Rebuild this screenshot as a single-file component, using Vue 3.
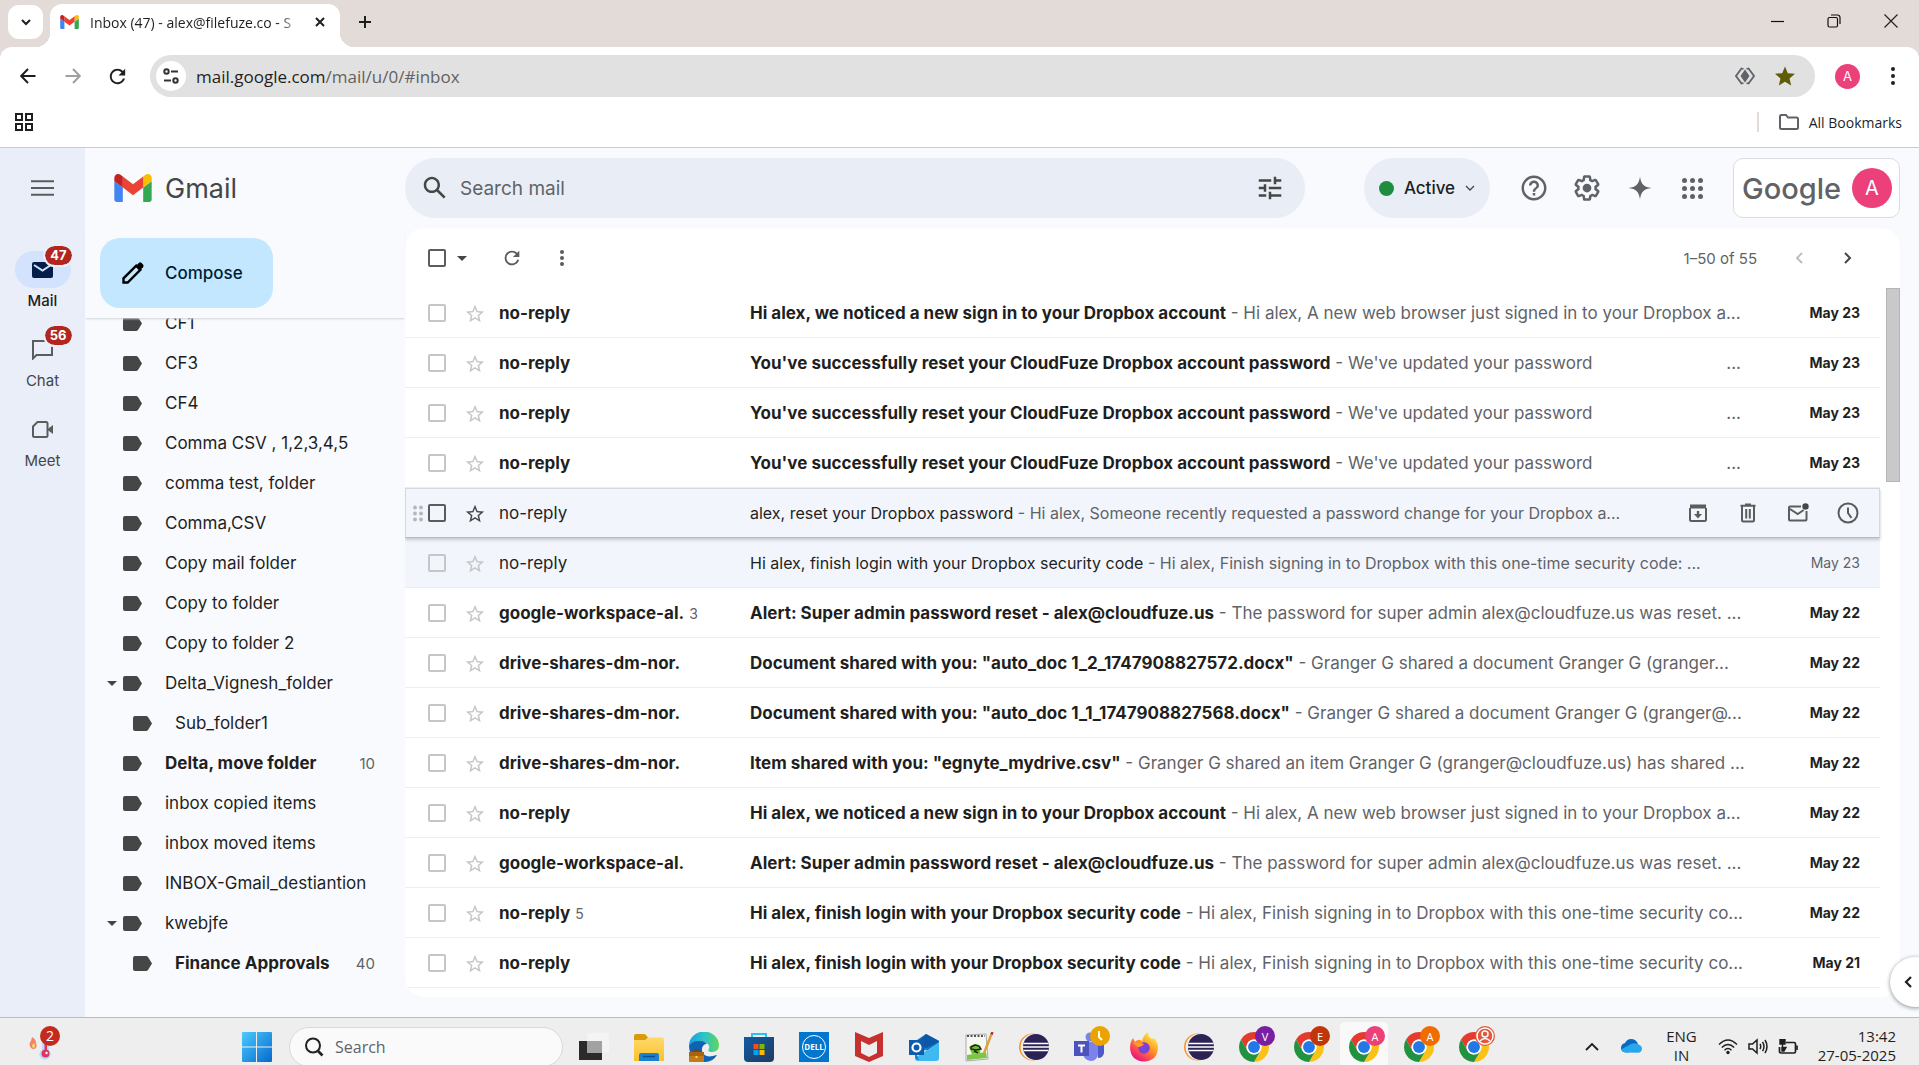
<script setup>
import { ref } from 'vue'

const labels = [
  { name: 'CF1' },
  { name: 'CF3' },
  { name: 'CF4' },
  { name: 'Comma CSV , 1,2,3,4,5' },
  { name: 'comma test, folder' },
  { name: 'Comma,CSV' },
  { name: 'Copy mail folder' },
  { name: 'Copy to folder' },
  { name: 'Copy to folder 2' },
  { name: 'Delta_Vignesh_folder', open: true },
  { name: 'Sub_folder1', sub: true },
  { name: 'Delta, move folder', count: 10 },
  { name: 'inbox copied items' },
  { name: 'inbox moved items' },
  { name: 'INBOX-Gmail_destiantion' },
  { name: 'kwebjfe', open: true },
  { name: 'Finance Approvals', sub: true, count: 40 },
]

const signIn = {
  from: 'no-reply',
  subject: 'Hi alex, we noticed a new sign in to your Dropbox account',
  text: 'Hi alex, A new web browser just signed in to your Dropbox a...',
}
const reset = {
  from: 'no-reply',
  subject: "You've successfully reset your CloudFuze Dropbox account password",
  text: "We've updated your password",
  gap: true,
}
const alertMail = {
  from: 'google-workspace-al.',
  subject: 'Alert: Super admin password reset - alex@cloudfuze.us',
  text: 'The password for super admin alex@cloudfuze.us was reset. ...',
}
const login = {
  from: 'no-reply',
  subject: 'Hi alex, finish login with your Dropbox security code',
  text: 'Hi alex, Finish signing in to Dropbox with this one-time security co...',
}

const mails = ref([
  { ...signIn, date: 'May 23' },
  { ...reset, date: 'May 23' },
  { ...reset, date: 'May 23' },
  { ...reset, date: 'May 23' },
  {
    from: 'no-reply',
    subject: 'alex, reset your Dropbox password',
    text: 'Hi alex, Someone recently requested a password change for your Dropbox a...',
    read: true,
    hover: true,
  },
  { ...login, text: 'Hi alex, Finish signing in to Dropbox with this one-time security code: ...', date: 'May 23', read: true },
  { ...alertMail, count: 3, date: 'May 22' },
  {
    from: 'drive-shares-dm-nor.',
    subject: 'Document shared with you: "auto_doc 1_2_1747908827572.docx"',
    text: 'Granger G shared a document Granger G (granger...',
    date: 'May 22',
  },
  {
    from: 'drive-shares-dm-nor.',
    subject: 'Document shared with you: "auto_doc 1_1_1747908827568.docx"',
    text: 'Granger G shared a document Granger G (granger@...',
    date: 'May 22',
  },
  {
    from: 'drive-shares-dm-nor.',
    subject: 'Item shared with you: "egnyte_mydrive.csv"',
    text: 'Granger G shared an item Granger G (granger@cloudfuze.us) has shared ...',
    date: 'May 22',
  },
  { ...signIn, date: 'May 22' },
  { ...alertMail, date: 'May 22' },
  { ...login, count: 5, date: 'May 22' },
  { ...login, date: 'May 21' },
])

const profiles = [
  { letter: 'V', color: '#7b1fa2' },
  { letter: 'E', color: '#bf360c' },
  { letter: 'A', color: '#ec407a', active: true },
  { letter: 'A', color: '#ef6c00' },
  { letter: '', color: '#e2583a' },
]

const starPath =
  'M22 9.24l-7.19-.62L12 2 9.19 8.63 2 9.24l5.46 4.73L5.82 21 12 17.27 18.18 21l-1.63-7.03L22 9.24zM12 15.4l-3.76 2.27 1-4.28-3.32-2.88 4.38-.38L12 6.1l1.71 4.04 4.38.38-3.32 2.88 1 4.28L12 15.4z'
const refreshPath =
  'M17.65 6.35C16.2 4.9 14.21 4 12 4c-4.42 0-7.99 3.58-7.99 8s3.57 8 7.99 8c3.73 0 6.84-2.55 7.73-6h-2.08c-.82 2.33-3.04 4-5.65 4-3.31 0-6-2.69-6-6s2.69-6 6-6c1.66 0 3.14.69 4.22 1.78L13 11h7V4l-2.35 2.35z'
const logo = [
  ['#4285f4', 'M58 108h14V74L52 59v43c0 3.32 2.69 6 6 6'],
  ['#34a853', 'M120 108h14c3.32 0 6-2.69 6-6V59l-20 15'],
  ['#fbbc04', 'M120 48v26l20-15v-8c0-7.42-8.47-11.65-14.4-7.2'],
  ['#ea4335', 'M72 74V48l24 18 24-18v26L96 92'],
  ['#c5221f', 'M52 51v8l20 15V48l-5.6-4.2c-5.94-4.45-14.4-.22-14.4 7.2'],
]
</script>

<template>
  <div class="screen">
    <header class="browser">
      <div class="tabstrip">
        <button class="tab-search" aria-label="Search tabs">
          <svg width="12" height="12" viewBox="0 0 12 12"><path d="M2 4l4 4 4-4" fill="none" stroke="#1f1f1f" stroke-width="2" /></svg>
        </button>
        <div class="tab">
          <svg width="19" height="14" viewBox="52 42 88 66"><path v-for="p in logo" :key="p[0]" :fill="p[0]" :d="p[1]" /></svg>
          <span class="tab-title">Inbox (47) - alex@filefuze.co - S</span>
          <button aria-label="Close tab">
            <svg width="12" height="12" viewBox="0 0 12 12"><path d="M2 2l8 8M10 2l-8 8" stroke="#1f1f1f" stroke-width="2" /></svg>
          </button>
        </div>
        <button class="new-tab" aria-label="New tab">
          <svg width="14" height="14" viewBox="0 0 14 14"><path d="M7 1v12M1 7h12" stroke="#1f1f1f" stroke-width="2" /></svg>
        </button>
        <div class="window-buttons">
          <button aria-label="Minimize"><svg width="14" height="14" viewBox="0 0 14 14"><path d="M1 7.500h13" stroke="#111" stroke-width="1.200" /></svg></button>
          <button aria-label="Restore">
            <svg width="14" height="14" viewBox="0 0 14 14" fill="none" stroke="#111" stroke-width="1.200">
              <rect x="1" y="3.500" width="9.500" height="9.500" rx="1.500" /><path d="M4 1h6.500a2.500 2.500 0 0 1 2.500 2.500V10" />
            </svg>
          </button>
          <button aria-label="Close"><svg width="14" height="14" viewBox="0 0 14 14"><path d="M.5.5l13 13M13.500.5l-13 13" stroke="#222" stroke-width="1.200" /></svg></button>
        </div>
      </div>

      <div class="toolbar">
        <button aria-label="Back"><svg width="16" height="16" viewBox="0 0 16 16"><path d="M15.500 8H1.500M8 1L1.200 8 8 15" fill="none" stroke="#1f1f1f" stroke-width="2" /></svg></button>
        <button aria-label="Forward"><svg width="16" height="16" viewBox="0 0 16 16"><path d="M.5 8h14M8 1l6.800 7L8 15" fill="none" stroke="#a0a0a0" stroke-width="2" /></svg></button>
        <button aria-label="Reload"><svg width="23" height="23" viewBox="0 0 24 24" fill="#1f1f1f"><path :d="refreshPath" /></svg></button>
        <div class="address">
          <button class="site-info" aria-label="Site information">
            <svg width="18" height="18" viewBox="0 0 18 18" fill="none" stroke="#333" stroke-width="2">
              <circle cx="4.500" cy="4.500" r="2.200" /><path d="M9 4.500h7" /><circle cx="13.500" cy="13.500" r="2.200" /><path d="M2 13.500h7" />
            </svg>
          </button>
          <a class="url" href="#inbox"><b>mail.google.com</b>/mail/u/0/#inbox</a>
          <svg width="20" height="18" viewBox="0 0 20 18" fill="none" stroke="#5f6368" stroke-width="1.800">
            <path d="M8.500 2L6.500 1.500 1 9l5.500 7.500 2-.5M11.500 2l2-.5L19 9l-5.500 7.500-2-.5" />
            <path d="M10 2.500L14.500 9 10 15.500 5.500 9z" fill="#5f6368" stroke="none" />
          </svg>
          <svg width="20" height="20" viewBox="2 2 20 19" fill="#5f5c07"><path d="M12 17.270L18.180 21l-1.640-7.030L22 9.240l-7.190-.61L12 2 9.190 8.630 2 9.240l5.460 4.730L5.820 21z" /></svg>
        </div>
        <span class="avatar small">A</span>
        <button aria-label="Menu"><svg width="6" height="20" viewBox="0 0 6 20" fill="#1f1f1f"><circle cx="3" cy="3" r="2" /><circle cx="3" cy="10" r="2" /><circle cx="3" cy="17" r="2" /></svg></button>
      </div>

      <div class="bookmarks">
        <svg width="18" height="18" viewBox="0 0 18 18" fill="none" stroke="#1f1f1f" stroke-width="2">
          <path d="M1 1h6v6H1zM11 1h6v6h-6zM1 11h6v6H1zM11 11h6v6h-6z" />
        </svg>
        <a class="all-bookmarks" href="#bookmarks">
          <svg width="20" height="16" viewBox="0 0 20 16" fill="none" stroke="#5f6368" stroke-width="2"><path d="M1 2.500Q1 1 2.500 1H7l2 2.500h8.500Q19 3.500 19 5v8.500q0 1.500-1.500 1.500h-15Q1 15 1 13.500z" /></svg>
          All Bookmarks
        </a>
      </div>
    </header>

    <div class="app">
      <nav class="rail">
        <button class="menu" aria-label="Main menu"><svg width="23" height="16" viewBox="0 0 23 16"><path d="M0 1.200h23M0 8h23M0 14.800h23" stroke="#5a5d5b" stroke-width="2" /></svg></button>
        <a class="rail-item current" href="#mail">
          <span class="pill">
            <svg width="21" height="16" viewBox="0 0 21 16"><rect width="21" height="16" rx="2" fill="#041e49" /><path d="M2 3l8.500 5.500L19 3" fill="none" stroke="#d3e3fd" stroke-width="2" /></svg>
            <span class="badge">47</span>
          </span>
          Mail
        </a>
        <a class="rail-item" href="#chat">
          <span class="pill">
            <svg width="21" height="20" viewBox="0 0 21 20"><path d="M1 18.500V1h19v14H4.500z" fill="none" stroke="#5a5d5b" stroke-width="2" /></svg>
            <span class="badge">56</span>
          </span>
          Chat
        </a>
        <a class="rail-item" href="#meet">
          <span class="pill">
            <svg width="21" height="17" viewBox="0 0 21 17"><path d="M5.500 1H14q1.500 0 1.500 1.500v12q0 1.500-1.500 1.500H2.500Q1 16 1 14.500v-9z" fill="none" stroke="#5a5d5b" stroke-width="2" /><path d="M15 8.500L21 4v9z" fill="#5a5d5b" /></svg>
          </span>
          Meet
        </a>
      </nav>

      <aside class="side">
        <div class="brand">
          <svg width="38" height="28" viewBox="52 42 88 66"><path v-for="p in logo" :key="p[0]" :fill="p[0]" :d="p[1]" /></svg>
          <span>Gmail</span>
        </div>
        <div class="compose-wrap">
          <button class="compose">
            <svg width="24" height="24" viewBox="0 0 24 24"><path d="M2.500 21.500v-4.200L15.200 4.600l4.200 4.200L6.700 21.500z" fill="none" stroke="#000" stroke-width="2.400" /><path d="M14.500 5.300l3.300-3.300q1.400-1.300 2.800 0l1.400 1.400q1.300 1.400 0 2.800l-3.300 3.300z" /></svg>
            Compose
          </button>
        </div>
        <div class="labels">
          <ul>
            <li v-for="l in labels" :key="l.name">
              <a href="#label" :class="{ sub: l.sub, unread: l.count }">
                <svg class="arrow" width="10" height="5" viewBox="0 0 10 5"><path v-if="l.open" d="M0 0h10L5 5z" fill="#444746" /></svg>
                <svg width="19" height="15" viewBox="0 0 19 15" fill="#444746"><path d="M2 0h11q1.300 0 2 1l4 6.500-4 6.500q-.7 1-2 1H2q-2 0-2-2V2q0-2 2-2z" /></svg>
                <span class="name">{{ l.name }}</span>
                <span v-if="l.count" class="count">{{ l.count }}</span>
              </a>
            </li>
          </ul>
        </div>
      </aside>

      <div class="content">
        <div class="topbar">
          <form class="search" @submit.prevent>
            <button aria-label="Search mail"><svg width="30" height="30" viewBox="0 0 24 24" fill="#444746"><path d="M20.490 19l-5.730-5.730C15.530 12.200 16 10.910 16 9.500 16 5.910 13.090 3 9.500 3S3 5.910 3 9.500 5.910 16 9.500 16c1.410 0 2.700-.47 3.770-1.240L19 20.490zM5 9.500C5 7.010 7.010 5 9.500 5S14 7.010 14 9.500 11.990 14 9.500 14 5 11.990 5 9.500z" /></svg></button>
            <input type="text" placeholder="Search mail" aria-label="Search mail" />
            <button aria-label="Show search options"><svg width="30" height="30" viewBox="0 0 24 24" fill="#444746"><path d="M3 17v2h6v-2H3zM3 5v2h10V5H3zm10 16v-2h8v-2h-8v-2h-2v6h2zM7 9v2H3v2h4v2h2V9H7zm14 4v-2H11v2h10zm-6-4h2V7h4V5h-4V3h-2v6z" /></svg></button>
          </form>
          <div class="tools">
            <button class="status">
              <i></i>Active
              <svg width="10" height="6" viewBox="0 0 10 6"><path d="M1 1l4 4 4-4" fill="none" stroke="#444746" stroke-width="1.300" /></svg>
            </button>
            <button class="tool" aria-label="Support"><svg width="30" height="30" viewBox="0 0 24 24" fill="#5f6368"><path d="M11 18h2v-2h-2v2zm1-16C6.480 2 2 6.480 2 12s4.480 10 10 10 10-4.480 10-10S17.520 2 12 2zm0 18c-4.410 0-8-3.590-8-8s3.590-8 8-8 8 3.590 8 8-3.590 8-8 8zm0-14c-2.210 0-4 1.790-4 4h2c0-1.100.9-2 2-2s2 .9 2 2c0 2-3 1.750-3 5h2c0-2.250 3-2.500 3-5 0-2.210-1.790-4-4-4z" /></svg></button>
            <button class="tool" aria-label="Settings">
              <svg width="30" height="30" viewBox="0 0 24 24" fill="#5f6368"><path d="M13.850 22.250h-3.700c-.74 0-1.360-.54-1.450-1.270l-.27-1.890c-.27-.14-.53-.29-.79-.46l-1.800.72c-.7.26-1.470-.03-1.810-.65L2.200 15.530c-.35-.66-.2-1.440.36-1.880l1.530-1.190c-.01-.15-.02-.3-.02-.46 0-.15.01-.31.02-.46l-1.520-1.190c-.59-.45-.74-1.260-.37-1.880l1.850-3.190c.34-.62 1.110-.9 1.790-.63l1.810.73c.26-.17.52-.32.78-.46l.27-1.910c.09-.7.71-1.250 1.440-1.250h3.700c.74 0 1.360.54 1.450 1.270l.27 1.890c.27.14.53.29.79.46l1.800-.72c.71-.26 1.480.03 1.820.65l1.840 3.180c.36.66.2 1.440-.36 1.880l-1.520 1.190c.01.15.02.3.02.46s-.01.31-.02.46l1.520 1.190c.56.45.72 1.230.37 1.860l-1.860 3.220c-.34.62-1.110.9-1.800.63l-1.800-.72c-.26.17-.52.32-.78.46l-.27 1.910c-.1.680-.72 1.220-1.460 1.220zm-3.230-2h2.760l.37-2.550.53-.22c.44-.18.880-.44 1.340-.78l.45-.34 2.380.96 1.380-2.400-2.030-1.580.07-.56c.03-.26.06-.51.06-.78s-.03-.53-.06-.78l-.07-.56 2.030-1.580-1.390-2.400-2.390.96-.45-.35c-.42-.32-.87-.58-1.330-.77l-.52-.22-.37-2.550h-2.760l-.37 2.550-.53.210c-.44.190-.88.440-1.340.790l-.45.330-2.380-.95-1.390 2.390 2.030 1.580-.07.560a7 7 0 0 0-.06.790c0 .26.020.53.060.78l.070.56-2.030 1.580 1.380 2.400 2.390-.96.450.35c.43.33.86.58 1.330.77l.53.22z" /><circle cx="12" cy="12" r="3.500" /></svg>
            </button>
            <button class="tool" aria-label="Assistant"><svg width="24" height="24" viewBox="0 0 24 24" fill="#5f6368"><path d="M12 0.500C12.800 8 16 11.200 23.500 12 16 12.800 12.800 16 12 23.500 11.200 16 8 12.800.5 12 8 11.200 11.200 8 12 .5z" /></svg></button>
            <button class="tool" aria-label="Google apps">
              <svg width="21" height="21" viewBox="0 0 21 21" fill="#5f6368"><circle v-for="n in 9" :key="n" :cx="2.5 + ((n - 1) % 3) * 8" :cy="2.5 + Math.floor((n - 1) / 3) * 8" r="2.500" /></svg>
            </button>
            <a class="account" href="#account"><span>Google</span><span class="avatar">A</span></a>
          </div>
        </div>

        <main class="panel">
          <div class="list-tools">
            <input type="checkbox" class="dark" aria-label="Select all" />
            <svg class="drop" width="10" height="5" viewBox="0 0 10 5"><path d="M0 0h10L5 5z" fill="#444746" /></svg>
            <button class="reload" aria-label="Refresh"><svg width="22" height="22" viewBox="0 0 24 24" fill="#5a5d5b"><path :d="refreshPath" /></svg></button>
            <button aria-label="More"><svg width="6" height="16" viewBox="0 0 6 16" fill="#5a5d5b"><circle cx="3" cy="2" r="2" /><circle cx="3" cy="8" r="2" /><circle cx="3" cy="14" r="2" /></svg></button>
            <span class="range">1–50 of 55</span>
            <button class="page" aria-label="Newer"><svg width="8" height="12" viewBox="0 0 8 12"><path d="M7 1L2 6l5 5" fill="none" stroke="#b9bbbd" stroke-width="1.800" /></svg></button>
            <button class="page" aria-label="Older"><svg width="8" height="12" viewBox="0 0 8 12"><path d="M1 1l5 5-5 5" fill="none" stroke="#444746" stroke-width="2" /></svg></button>
          </div>
          <div class="list-area">
            <ul class="mails">
              <li v-for="(m, i) in mails" :key="i" :class="{ read: m.read, hover: m.hover }">
                <span class="grip"><svg v-if="m.hover" width="10" height="17" viewBox="0 0 10 17" fill="#b4b7bb"><circle v-for="n in 6" :key="n" :cx="2 + ((n - 1) % 2) * 6" :cy="2.5 + Math.floor((n - 1) / 2) * 6" r="1.900" /></svg></span>
                <input type="checkbox" :class="{ dark: m.hover }" aria-label="Select conversation" />
                <button class="star" aria-label="Star"><svg width="22" height="22" viewBox="0 0 24 24" :fill="m.hover ? '#444746' : '#c4c6c8'"><path :d="starPath" /></svg></button>
                <span class="from">{{ m.from }}<small v-if="m.count">{{ m.count }}</small></span>
                <a class="line" href="#message">
                  <span><b>{{ m.subject }}</b><span class="snippet"> - {{ m.text }}</span></span>
                  <span v-if="m.gap" class="snippet">...</span>
                </a>
                <span v-if="!m.hover" class="date">{{ m.date }}</span>
                <span v-else class="actions">
                  <button aria-label="Archive"><svg width="20" height="20" viewBox="0 0 20 20" fill="none" stroke="#5a5d5b" stroke-width="2"><path d="M2 5v11.500Q2 18 3.500 18h13q1.500 0 1.500-1.500V5" /><path d="M2 3.500h16" stroke-width="4" /><path d="M10 8v5" stroke-width="2.400" /><path d="M6 11h8l-4 4.500z" fill="#5a5d5b" stroke="none" /></svg></button>
                  <button aria-label="Delete"><svg width="20" height="20" viewBox="0 0 20 20" fill="none" stroke="#5a5d5b" stroke-width="2"><path d="M4 3v14q0 1.500 1.500 1.500h9q1.500 0 1.500-1.500V3M2.500 2.800h15M7 1.500h6M8.200 6v9.500M11.800 6v9.500" /></svg></button>
                  <button aria-label="Mark as unread"><svg width="22" height="20" viewBox="0 0 22 20" fill="none" stroke="#5a5d5b" stroke-width="2"><path d="M14 3.500H3Q2 3.500 2 4.500v12q0 1 1 1h15.500q1 0 1-1V8M3 6l7.700 5 6-4" /><circle cx="18.500" cy="3.500" r="3.200" fill="#444746" stroke="none" /></svg></button>
                  <button aria-label="Snooze"><svg width="22" height="22" viewBox="0 0 22 22" fill="none" stroke="#5a5d5b" stroke-width="2"><circle cx="11" cy="11" r="9.500" /><path d="M11 5.500V11l3.500 5" /></svg></button>
                </span>
              </li>
            </ul>
            <div class="scrollbar"><i></i></div>
          </div>
        </main>
      </div>
      <button class="panel-toggle" aria-label="Show side panel"><svg width="8" height="12" viewBox="0 0 8 12"><path d="M7 1L2 6l5 5" fill="none" stroke="#1f1f1f" stroke-width="2.200" /></svg></button>
    </div>

    <footer class="taskbar">
      <button class="weather" aria-label="Widgets">
        <svg width="36" height="38" viewBox="0 0 36 38">
          <path d="M5 24q-3-4 0-7l1-4q4 2 4 6 2 5-2 6-2 0-3-1z" fill="#f4845f" /><path d="M6 23q0-3 2-4 2 3 0 5z" fill="#ffd27a" />
          <path d="M16 14a3 3 0 0 1 7 0v12q3 3 1 7-4 5-9 1-4-4 1-8z" fill="#bcdcff" /><path d="M18.500 12h2.500v15h-2.500z" fill="#e0355d" /><circle cx="19.500" cy="29.500" r="4" fill="#e0355d" /><circle cx="20.500" cy="29" r="1.200" fill="#fff" />
        </svg>
        <span>2</span>
      </button>
      <button aria-label="Start" class="start">
        <svg width="30" height="30" viewBox="0 0 30 30"><defs><linearGradient id="win" x1="0" y1="0" x2="1" y2="1"><stop offset="0" stop-color="#4ccbff" /><stop offset="1" stop-color="#0669cc" /></linearGradient></defs><path d="M0 1q0-1 1-1h13v14.500H0zM15 0h14q1 0 1 1v13.500H15zM0 15.500h14V30H1q-1 0-1-1zM15 15.500h15V29q0 1-1 1H15z" fill="url(#win)" /></svg>
      </button>
      <label class="task-search">
        <svg width="20" height="20" viewBox="0 0 20 20" fill="none" stroke="#222" stroke-width="2"><circle cx="9" cy="8.500" r="7" /><path d="M14 14l4.500 4.500" stroke-width="2.600" /></svg>
        <input type="text" placeholder="Search" aria-label="Search" />
      </label>
      <div class="apps">
        <button aria-label="Task view"><svg width="30" height="30" viewBox="0 0 30 30"><path d="M0 9h23v19H0z" fill="#2b2b2b" /><path d="M8 1h22v20H8z" fill="#f6f6f6" opacity=".75" /><path d="M8 9h15v12H8z" fill="#a2a2a2" /></svg></button>
        <button aria-label="File Explorer">
          <svg width="30" height="30" viewBox="0 0 30 30">
            <defs><linearGradient id="folder" x1="0" y1="0" x2="0" y2="1"><stop offset="0" stop-color="#ffd969" /><stop offset="1" stop-color="#fbc02c" /></linearGradient></defs>
            <path d="M0 4q0-2 2-2h8q1 0 2 1l2 2.500v4H0z" fill="#d99b0c" /><path d="M0 8h11l3-2.500h14q2 0 2 2V29H0z" fill="url(#folder)" /><path d="M5 29v-6q0-2 2-2h16q2 0 2 2v6z" fill="#1b82cf" /><path d="M9 24.500h12" stroke="#0a4f94" stroke-width="1.500" />
          </svg>
        </button>
        <button aria-label="Edge">
          <svg width="30" height="30" viewBox="0 0 30 30">
            <defs><linearGradient id="edge" x1="0" y1="0" x2="1" y2="0"><stop offset="0" stop-color="#1a9fe0" /><stop offset=".5" stop-color="#2cc3c9" /><stop offset="1" stop-color="#5fd65b" /></linearGradient></defs>
            <path d="M0 14A15 14 0 0 1 30 13q0 7-7 7-4 0-4-2 2-1 1-4-1-4-7-4Q4 10 0 14z" fill="url(#edge)" />
            <path d="M0 14q3-5 10-5 6 0 8 3-6 1-5 7 2 7 11 5 3-1 4-1-4 7-12 7Q1 30 0 14z" fill="#0f62b4" />
            <path d="M14 16q0-4 4-4 3 2 1 6 1 3 5 3-3 2-6 1-4-2-4-6z" fill="#eee" />
            <path d="M0 20h15v9q0 1-1 1H1q-1 0-1-1z" fill="#c47a16" /><path d="M0 20h15v4H0z" fill="#a8640f" /><path d="M5 20v-2h5v2" fill="none" stroke="#7a4507" stroke-width="1.500" /><path d="M6.500 24h2v2h-2z" fill="#ffd35b" />
          </svg>
        </button>
        <button aria-label="Store">
          <svg width="30" height="30" viewBox="0 0 30 30">
            <defs><linearGradient id="bag" x1="0" y1="0" x2="1" y2="1"><stop offset="0" stop-color="#0f5ca5" /><stop offset="1" stop-color="#223a5e" /></linearGradient></defs>
            <path d="M8 6V2h14v4" fill="none" stroke="#2fc0f2" stroke-width="2" /><path d="M0 5h30v21q0 4-4 4H4q-4 0-4-4z" fill="url(#bag)" /><path d="M9.500 12h5v5h-5z" fill="#f25022" /><path d="M15.500 12h5v5h-5z" fill="#7fba00" /><path d="M9.500 18h5v5h-5z" fill="#00a4ef" /><path d="M15.500 18h5v5h-5z" fill="#ffb900" />
          </svg>
        </button>
        <button aria-label="Dell"><span class="dell"><i>DELL</i></span></button>
        <button aria-label="McAfee"><svg width="28" height="30" viewBox="0 0 28 30"><path d="M0 0l14 6 14-6v24l-14 6-14-6z" fill="#c6302f" /><path d="M6 9l8 4 8-4v12l-8 4-8-4z" fill="#eee" /></svg></button>
        <button aria-label="Outlook"><svg width="30" height="28" viewBox="0 0 30 28"><path d="M5 9L17 1l13 7-10 9H5z" fill="#1a6fc4" /><path d="M17 1l13 7v3L19 17 9 9z" fill="#0d57a7" /><path d="M30 9v16q0 3-3 3H9q-3 0-3-3z" fill="#3fb9ef" /><path d="M30 9L8 22l2 5q-4 0-4-3v-6l12-3z" fill="#1d7fd0" /><path d="M0 7h15v15H0z" fill="#0f5cad" /><circle cx="7.500" cy="14.500" r="4" fill="none" stroke="#fff" stroke-width="2.200" /></svg></button>
        <button aria-label="Notepad++"><svg width="30" height="30" viewBox="0 0 30 30"><path d="M2 3l20-1 2 25-22 2z" fill="#f8f8f2" stroke="#aaa" /><path d="M3 4h18" stroke="#555" stroke-width="2" stroke-dasharray="2 1.500" /><path d="M5 15q7-6 12 0l-1 6-8 1z" fill="#70bf2a" /><path d="M3 23l19-3 1 6-20 2z" fill="#7dc548" /><path d="M7 15l4-2 4 1 2 3-5 1-5-1zM10 19l4 2" stroke="#222" stroke-width="1.400" fill="none" /><path d="M28 1l-8 20" stroke="#e0a038" stroke-width="2.400" /><path d="M28.500 0l-1 2.500" stroke="#a33" stroke-width="2.400" /></svg></button>
        <button aria-label="Eclipse"><svg width="30" height="28" viewBox="0 0 30 28"><circle cx="13.500" cy="14" r="13.500" fill="#f6962d" /><circle cx="14.800" cy="14" r="13.200" fill="#eee" /><circle cx="17" cy="14" r="13" fill="#2c2255" /><path d="M4.500 10.500h25M4 14h26M4.500 17.500h25" stroke="#fff" stroke-width="1.600" /></svg></button>
        <button aria-label="Teams" class="badged"><svg width="30" height="30" viewBox="0 0 30 30"><circle cx="16" cy="5" r="4.500" fill="#7b83eb" /><path d="M22 11h8v10q-1 5-6 5z" fill="#5059c9" /><path d="M9 10h15v12q-1 7-7 7-7-1-8-7z" fill="#7b83eb" /><path d="M0 9h15v15H0z" fill="#4b53bc" /><path d="M4 13.500h7M7.500 13.500v7" stroke="#fff" stroke-width="2" /></svg>
          <span class="pin" style="background: #eaa300"><svg width="8" height="10" viewBox="0 0 8 10"><path d="M3 0v6l3 3" fill="none" stroke="#fff" stroke-width="2" /></svg></span>
        </button>
        <button aria-label="Firefox">
          <svg width="30" height="30" viewBox="0 0 30 30">
            <defs><linearGradient id="fox" x1=".9" y1="0" x2=".2" y2="1"><stop offset=".1" stop-color="#fff04a" /><stop offset=".5" stop-color="#ff8a24" /><stop offset=".9" stop-color="#f0197a" /></linearGradient></defs>
            <path d="M15 29.500Q2 29 1 16 1 10 4 6l2 4q3-3 5-2 1-1 2 2 1-7 6-10 0 5 4 7l2-1q4 4 4 10-1 13-14 13.500z" fill="url(#fox)" /><circle cx="15" cy="16" r="5.800" fill="#7a42d8" /><path d="M4 11q5-2 11 1-2 3-6 3z" fill="#ff9a2c" />
          </svg>
        </button>
        <button aria-label="Eclipse IDE"><svg width="30" height="28" viewBox="0 0 30 28"><circle cx="13.500" cy="14" r="13.500" fill="#f6962d" /><circle cx="14.800" cy="14" r="13.200" fill="#eee" /><circle cx="17" cy="14" r="13" fill="#2c2255" /><path d="M4.500 10.500h25M4 14h26M4.500 17.500h25" stroke="#fff" stroke-width="1.600" /></svg></button>
        <button v-for="(p, i) in profiles" :key="i" class="badged" :class="{ active: p.active }" aria-label="Chrome">
          <svg width="30" height="30" viewBox="2 2 44 44"><path d="M24 2a22 22 0 0 1 19.050 11H24a11 11 0 0 0-9.530 16.500L4.950 13A22 22 0 0 1 24 2z" fill="#e33b2e" /><path d="M43.050 13A22 22 0 0 1 24 46l9.530-16.500A11 11 0 0 0 24 13z" fill="#fbc116" /><path d="M4.950 13l9.520 16.500a11 11 0 0 0 19.060 0L24 46A22 22 0 0 1 4.950 13z" fill="#21923f" /><circle cx="24" cy="24" r="11" fill="#fff" /><circle cx="24" cy="24" r="8.700" fill="#2378e8" /></svg>
          <span class="pin" :style="{ background: p.color }">{{ p.letter }}<svg v-if="!p.letter" width="18" height="18" viewBox="0 0 18 18" fill="none" stroke="#fff" stroke-width="1.500"><circle cx="9" cy="9" r="8" /><circle cx="9" cy="7" r="3" /><path d="M4 14q5-5 10 0" /></svg></span>
        </button>
      </div>
      <div class="tray">
        <svg width="14" height="9" viewBox="0 0 14 9"><path d="M1 8l6-6 6 6" fill="none" stroke="#1f1f1f" stroke-width="1.800" /></svg>
        <svg class="cloud" width="21" height="14" viewBox="0 0 21 14"><path d="M5 13.500Q0 13 0 9q0-4 4-5 2-4 6-4 5 0 7 5l-7 8z" fill="#0a68c6" /><path d="M4 13.500q-3-1-4-3l11-6q3-1 6 .8 4 1 4 4.500-.5 4-4 4z" fill="#28a8ea" /></svg>
        <span class="lang">ENG<br />IN</span>
        <svg width="20" height="17" viewBox="0 0 20 17" fill="none" stroke="#1f1f1f" stroke-width="1.500"><path d="M1 6.500q9-9 18 0M3.800 9.500q6.200-6 12.400 0M6.500 12.200q3.500-3.300 7 0" /><circle cx="10" cy="14.500" r="1.700" fill="#1f1f1f" stroke="none" /></svg>
        <svg width="20" height="17" viewBox="0 0 20 17" fill="none" stroke="#1f1f1f" stroke-width="1.500"><path d="M1 6v5h3.500L9 15V2L4.500 6zM12 6q1.500 2.500 0 5M14.500 3.800q3 4.700 0 9.400M17 2q4 6.500 0 13" /></svg>
        <svg width="20" height="17" viewBox="0 0 20 17" fill="none" stroke="#1f1f1f" stroke-width="1.700"><path d="M8 4.500h8q1.500 0 1.500 1.500v7.500q0 1.500-1.500 1.500H3q-1.500 0-1.500-1.500V9" /><path d="M19 7.500v4.500" /><path d="M2 1v5h5V1M4.500 6v3M4 13V9.500h4l-2 3.500z" fill="#1f1f1f" stroke-width="1.400" /></svg>
        <span class="clock">13:42<br />27-05-2025</span>
      </div>
    </footer>
  </div>
</template>

<style>
body {
  overflow: hidden;
}
</style>

<style scoped>
.screen {
  --ui: 'Open Sans', 'Noto Sans', sans-serif;
  --text: Inter, 'Liberation Sans', sans-serif;
  display: flex;
  flex-direction: column;
  height: 100vh;
  font-family: var(--text);
  color: #1f1f1f;
  background: #f8fafd;
}
* {
  box-sizing: border-box;
}
svg {
  display: block;
  flex: none;
}
button {
  display: flex;
  align-items: center;
  justify-content: center;
  flex: none;
  margin: 0;
  padding: 0;
  border: 0;
  background: none;
  color: inherit;
  font: inherit;
}
a {
  color: inherit;
  text-decoration: none;
}
ul {
  margin: 0;
  padding: 0;
  list-style: none;
}
input {
  min-width: 0;
  margin: 0;
  padding: 0;
  border: 0;
  outline: 0;
  background: none;
  font: inherit;
}
input[type='checkbox'] {
  flex: none;
  width: 18px;
  height: 18px;
  appearance: none;
  border: 2px solid #c4c6c8;
  border-radius: 2px;
}
input[type='checkbox'].dark {
  border-color: #5a5d5b;
}

.browser {
  flex: none;
  background: #e3dbd8;
  border-bottom: 1px solid #c9cbcf;
  font-family: var(--ui);
}
.tabstrip {
  display: flex;
  height: 47px;
  padding-left: 8px;
}
.tab-search {
  width: 35px;
  height: 34px;
  margin: 5px 7px 0 0;
  border-radius: 11px;
  background: #fff;
}
.tab {
  position: relative;
  display: flex;
  align-items: center;
  width: 290px;
  margin-top: 4px;
  padding: 0 14px 7px 10px;
  border-radius: 12px 12px 0 0;
  background: #fff;
}
.tab::before,
.tab::after {
  content: '';
  position: absolute;
  bottom: 0;
  width: 14px;
  height: 14px;
}
.tab::before {
  right: 100%;
  background: radial-gradient(circle at 0 0, transparent 14px, #fff 14px);
}
.tab::after {
  left: 100%;
  background: radial-gradient(circle at 100% 0, transparent 14px, #fff 14px);
}
.tab-title {
  flex: 1;
  margin: 0 10px 0 11px;
  overflow: hidden;
  white-space: nowrap;
  font-size: 14px;
  mask-image: linear-gradient(90deg, #000 88%, transparent);
}
.new-tab {
  width: 50px;
  height: 44px;
}
.window-buttons {
  display: flex;
  height: 42px;
  margin-left: auto;
}
.window-buttons button {
  width: 57px;
}
.toolbar {
  display: flex;
  align-items: center;
  height: 58px;
  border-radius: 12px 12px 0 0;
  background: #fff;
}
.toolbar > button {
  width: 45px;
  height: 45px;
}
.toolbar > button:first-child {
  margin-left: 5px;
}
.address {
  display: flex;
  flex: 1;
  align-items: center;
  height: 42px;
  margin: 0 20px 0 10px;
  padding: 0 20px 0 6px;
  gap: 20px;
  border-radius: 21px;
  background: #e1e1e1;
}
.site-info {
  width: 30px;
  height: 30px;
  margin-right: -10px;
  border-radius: 50%;
  background: #fff;
}
.url {
  flex: 1;
  color: #616161;
  font-size: 17px;
}
.url b {
  color: #1f1f1f;
  font-weight: 400;
}
.avatar {
  display: flex;
  align-items: center;
  justify-content: center;
  width: 40px;
  height: 40px;
  border-radius: 50%;
  background: #ec407a;
  color: #fff;
  font-family: var(--text);
  font-size: 20px;
}
.avatar.small {
  width: 25px;
  height: 25px;
  margin-right: 10px;
  font-size: 13px;
}
.toolbar > button:last-child {
  margin-right: 4px;
}
.bookmarks {
  display: flex;
  align-items: center;
  justify-content: space-between;
  height: 42px;
  padding: 0 17px 8px 15px;
  background: #fff;
}
.all-bookmarks {
  display: flex;
  align-items: center;
  gap: 10px;
  height: 20px;
  padding-left: 20px;
  border-left: 2px solid #e3dbd8;
  font-size: 14px;
}

.app {
  position: relative;
  display: flex;
  flex: 1;
  min-height: 0;
  overflow: hidden;
}
.rail {
  display: flex;
  flex: none;
  flex-direction: column;
  align-items: center;
  width: 85px;
  background: #e9eef8;
}
.menu {
  height: 80px;
  margin-bottom: 23px;
}
.rail-item {
  display: flex;
  flex-direction: column;
  align-items: center;
  width: 100%;
  height: 80px;
  gap: 3px;
  color: #444746;
  font-size: 15px;
  line-height: 20px;
}
.rail-item.current {
  color: #1f1f1f;
  font-weight: 500;
}
.pill {
  position: relative;
  display: flex;
  align-items: center;
  justify-content: center;
  width: 56px;
  height: 37px;
  border-radius: 19px;
}
.current .pill {
  background: #d3e3fd;
}
.badge {
  position: absolute;
  top: -5px;
  right: -1px;
  padding: 0 5px;
  border-radius: 10px;
  outline: 2px solid #e9eef8;
  background: #b3261e;
  color: #fff;
  font-size: 13px;
  font-weight: 700;
  line-height: 19px;
}
.side {
  display: flex;
  flex: none;
  flex-direction: column;
  width: 320px;
}
.brand {
  display: flex;
  align-items: center;
  gap: 13px;
  height: 80px;
  padding-left: 29px;
  color: #444746;
  font-size: 27px;
}
.compose-wrap {
  z-index: 1;
  padding: 10px 15px;
  box-shadow: 0 2px 2px -1px #cfd2d8;
}
.compose {
  justify-content: flex-start;
  gap: 20px;
  width: 173px;
  height: 70px;
  padding-left: 21px;
  border-radius: 20px;
  background: #c2e7ff;
  color: #001d35;
  font-size: 17px;
  font-weight: 500;
}
.labels {
  display: flex;
  flex: 1;
  flex-direction: column;
  min-height: 0;
  overflow: hidden;
}
.labels ul {
  margin-top: -15px;
}
.labels a {
  display: flex;
  align-items: center;
  height: 40px;
  padding: 0 30px 0 22px;
  font-size: 17px;
}
.labels a.sub {
  padding-left: 32px;
}
.arrow {
  margin-right: 6px;
}
.name {
  flex: 1;
  margin-left: 23px;
  white-space: nowrap;
}
.unread .name {
  font-weight: 700;
}
.count {
  color: #5f6368;
  font-size: 15px;
}

.content {
  display: flex;
  flex: 1;
  flex-direction: column;
  min-width: 0;
  padding: 0 19px 20px 0;
}
.topbar {
  display: flex;
  align-items: center;
  justify-content: space-between;
  height: 80px;
}
.search {
  display: flex;
  flex: 1;
  align-items: center;
  max-width: 900px;
  height: 60px;
  padding: 0 20px 0 15px;
  border-radius: 30px;
  background: #e9eef6;
  font-size: 19px;
}
.search input {
  flex: 1;
  margin-left: 10px;
}
input::placeholder {
  color: #5f6368;
  opacity: 1;
}
.tools {
  display: flex;
  align-items: center;
}
.status {
  gap: 10px;
  width: 126px;
  height: 60px;
  margin-right: 17px;
  border-radius: 30px;
  background: #e9eef6;
  font-size: 17px;
  font-weight: 500;
}
.status i {
  width: 15px;
  height: 15px;
  border-radius: 50%;
  background: #1e8e3e;
}
.tool {
  width: 53px;
  height: 50px;
}
.account {
  display: flex;
  align-items: center;
  justify-content: space-between;
  width: 167px;
  height: 60px;
  margin-left: 14px;
  padding: 0 7px 0 8px;
  border: 1px solid #dadce0;
  border-radius: 10px;
  background: #fff;
  color: #5f6368;
  font-size: 29px;
  font-weight: 500;
}
.account .avatar {
  font-weight: 400;
}
.panel {
  display: flex;
  flex: 1;
  flex-direction: column;
  min-height: 0;
  overflow: hidden;
  border-radius: 20px;
  background: #fff;
}
.list-tools {
  display: flex;
  flex: none;
  align-items: center;
  height: 60px;
  padding: 0 28px 0 23px;
}
.drop {
  margin: 0 34px 0 11px;
}
.reload {
  margin-right: 36px;
}
.range {
  margin: 0 17px 0 auto;
  color: #5f6368;
  font-size: 15px;
}
.page {
  width: 49px;
  height: 40px;
}
.list-area {
  display: flex;
  flex: 1;
  min-height: 0;
  gap: 6px;
}
.mails {
  flex: 1;
  min-width: 0;
}
.mails li {
  display: flex;
  align-items: center;
  height: 50px;
  padding-right: 20px;
  border-bottom: 1px solid #eceff1;
  font-size: 17px;
}
.mails li.read {
  background: #f2f5fc;
}
.mails li.hover {
  position: relative;
  border: 1px solid #d5d8de;
  border-bottom-color: #b8bcc2;
  box-shadow: 0 2px 3px #c5c8ce;
}
.grip {
  width: 23px;
  padding-left: 8px;
}
.hover .grip {
  width: 22px;
  padding-left: 7px;
}
.star {
  width: 22px;
  margin: 2px 13px 0 18px;
}
.from {
  width: 251px;
  white-space: nowrap;
  font-weight: 700;
}
.from small {
  margin-left: 5px;
  color: #5f6368;
  font-size: 14px;
  font-weight: 400;
}
.line {
  display: flex;
  flex: 1;
  justify-content: space-between;
  min-width: 0;
  white-space: nowrap;
}
.line b {
  font-weight: 700;
}
.mails li.read .line {
  font-size: 16px;
}
.read .from,
.read .line b,
.read .date {
  font-weight: 400;
}
.snippet {
  color: #5f6368;
}
.date {
  width: 119px;
  text-align: right;
  font-size: 14px;
  font-weight: 700;
}
.read .date {
  color: #5f6368;
}
.actions {
  display: flex;
  margin-right: -14px;
}
.actions button {
  width: 50px;
}
.scrollbar {
  width: 14px;
}
.scrollbar i {
  display: block;
  height: 194px;
  border: 1px solid #b5b5b5;
  background: #c9c9c9;
}
.panel-toggle {
  position: absolute;
  right: -21px;
  bottom: 10px;
  width: 50px;
  height: 50px;
  padding-right: 14px;
  border-radius: 50%;
  background: #fff;
  box-shadow: 0 1px 4px #8c8f94;
}

.taskbar {
  display: flex;
  flex: none;
  align-items: flex-start;
  height: 48px;
  overflow: hidden;
  border-top: 1px solid #bcbcbf;
  background: #eee;
  font-family: var(--ui);
}
.weather {
  position: relative;
  width: 40px;
  margin: 6px 0 0 24px;
}
.weather span {
  position: absolute;
  top: 2px;
  right: 4px;
  width: 20px;
  border-radius: 50%;
  background: #c42b1c;
  color: #fff;
  font-size: 14px;
  line-height: 20px;
}
.start {
  margin: 14px 17px 0 178px;
}
.task-search {
  display: flex;
  align-items: center;
  width: 274px;
  height: 40px;
  margin-top: 9px;
  padding-left: 14px;
  gap: 11px;
  border: 1px solid #d9d9d9;
  border-radius: 20px;
  background: #fafafa;
  font-size: 16px;
}
.apps {
  display: flex;
  gap: 7px;
  margin: 4px 0 0 7px;
}
.apps button {
  position: relative;
  width: 48px;
  height: 50px;
  border-radius: 5px;
}
.apps .active {
  background: #f9f9f9;
}
.pin {
  position: absolute;
  top: 4px;
  right: 3px;
  display: flex;
  align-items: center;
  justify-content: center;
  width: 20px;
  height: 20px;
  border-radius: 50%;
  color: #fff;
  font-size: 11px;
}
.dell {
  display: flex;
  align-items: center;
  justify-content: center;
  width: 30px;
  height: 30px;
  background: #0076ce;
  color: #fff;
  font-size: 8px;
  font-weight: 700;
}
.dell i {
  width: 24px;
  border: 1px solid #fff;
  border-radius: 50%;
  font-style: normal;
  line-height: 22px;
}
.tray {
  display: flex;
  align-items: center;
  margin: 9px 23px 0 auto;
  gap: 10px;
  font-size: 15px;
  line-height: 19px;
}
.cloud {
  margin: 0 14px 0 12px;
}
.lang {
  margin-right: 11px;
  text-align: center;
}
.clock {
  margin-left: 10px;
  text-align: right;
}
</style>
